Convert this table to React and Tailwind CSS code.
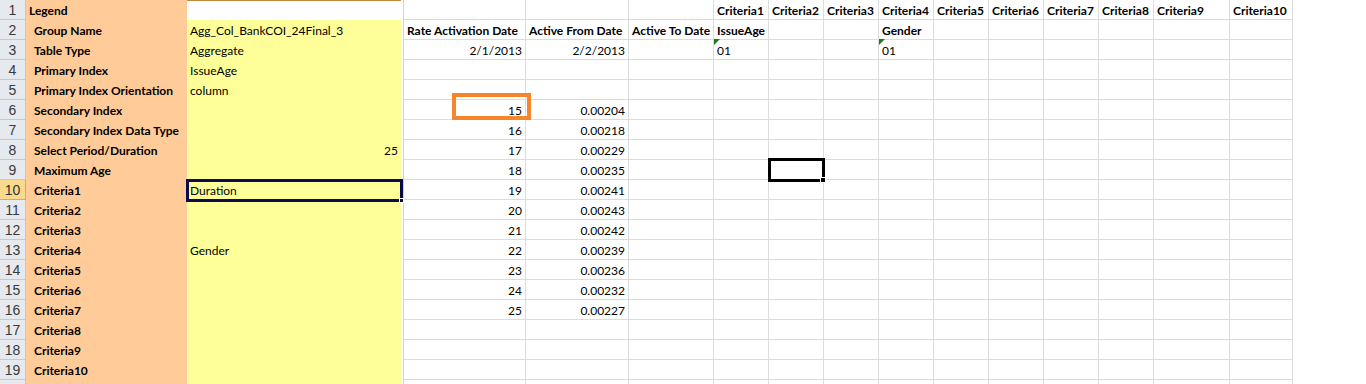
import React from "react";

const cols = [
  "w-[122px]", // C
  "w-[103px]", // D
  "w-[85px]", // E
  "w-[55px]", // F
  "w-[55px]", // G
  "w-[55px]", // H
  "w-[55px]", // I
  "w-[55px]", // J
  "w-[55px]", // K
  "w-[55px]", // L
  "w-[55px]", // M
  "w-[76px]", // N
  "w-[63px]", // O
];

// v = text, b = bold, r = right aligned, t = green triangle
const criteriaHead = Array.from({ length: 10 }, (_, i) => ({ v: `Criteria${i + 1}`, b: true }));

const rows = [
  { a: "Legend", legend: true, c: [null, null, null, ...criteriaHead] },
  {
    a: "Group Name",
    b: "Agg_Col_BankCOI_24Final_3",
    c: [
      { v: "Rate Activation Date", b: true },
      { v: "Active From Date", b: true },
      { v: "Active To Date", b: true },
      { v: "IssueAge", b: true },
      null,
      null,
      { v: "Gender", b: true },
    ],
  },
  {
    a: "Table Type",
    b: "Aggregate",
    c: [
      { v: "2/1/2013", r: true },
      { v: "2/2/2013", r: true },
      null,
      { v: "01", t: true },
      null,
      null,
      { v: "01", t: true },
    ],
  },
  { a: "Primary Index", b: "IssueAge" },
  { a: "Primary Index Orientation", b: "column" },
  { a: "Secondary Index", n: ["15", "0.00204"], mark: true },
  { a: "Secondary Index Data Type", n: ["16", "0.00218"] },
  { a: "Select Period/Duration", b: "25", bRight: true, n: ["17", "0.00229"] },
  { a: "Maximum Age", n: ["18", "0.00235"], active: true },
  { a: "Criteria1", b: "Duration", n: ["19", "0.00241"], selected: true },
  { a: "Criteria2", n: ["20", "0.00243"] },
  { a: "Criteria3", n: ["21", "0.00242"] },
  { a: "Criteria4", b: "Gender", n: ["22", "0.00239"] },
  { a: "Criteria5", n: ["23", "0.00236"] },
  { a: "Criteria6", n: ["24", "0.00232"] },
  { a: "Criteria7", n: ["25", "0.00227"] },
  { a: "Criteria8" },
  { a: "Criteria9" },
  { a: "Criteria10" },
  { a: "", tail: true },
];

const Cell = ({ w, cell, children }) => (
  <div
    className={`relative ${w} h-[20px] shrink-0 border-r border-b border-[#dadcdd] flex items-end px-[3px] whitespace-nowrap ${
      cell?.r ? "justify-end" : ""
    } ${cell?.b ? "font-bold" : ""}`}
  >
    {cell?.t && (
      <span className="absolute -top-[1px] left-0 w-0 h-0 border-t-[6px] border-r-[6px] border-t-[#1c7d1c] border-r-transparent" />
    )}
    {cell?.v}
    {children}
  </div>
);

const App = () => {
  return (
    <div className="w-[1366px] h-[384px] overflow-hidden bg-white text-[12px] leading-[16px] text-black font-['Lato','Liberation_Sans',sans-serif]">
      {rows.map((row, idx) => {
        const num = idx + 1;
        const cells = row.n
          ? [{ v: row.n[0], r: true }, { v: row.n[1], r: true }]
          : row.c || [];
        return (
          <div key={num} className="flex">
            <div
              className={`w-[26px] h-[20px] shrink-0 flex items-end pb-[1px] justify-center border-r border-b text-[14px] font-['Liberation_Sans',sans-serif] ${
                row.selected
                  ? "bg-[#f9d98c] border-[#f0a43a] text-[#333]"
                  : "bg-[#e6e9ee] border-[#c3c9d1] text-[#3a3a3a]"
              }`}
            >
              {row.tail ? "" : num}
            </div>
            <div
              className={`w-[161px] h-[20px] shrink-0 bg-[#ffcc99] flex items-end pb-[1px] font-bold whitespace-nowrap ${
                row.legend ? "pl-[3px]" : "pl-[8px]"
              }`}
            >
              {row.a}
            </div>
            <div
              className={`relative w-[214px] h-[20px] shrink-0 flex items-end pb-[1px] px-[3px] whitespace-nowrap ${
                row.legend ? "bg-white border-t border-[#c7883f]" : "bg-[#ffff99]"
              } ${row.bRight ? "justify-end" : ""}`}
            >
              {row.b}
              {row.selected && (
                <div className="absolute -left-[1px] -top-[1px] w-[217px] h-[23px] border-[3px] border-[#0b0b4f] z-10">
                  <span className="absolute -right-[4px] -bottom-[4px] w-[5px] h-[5px] bg-[#0b0b4f] border border-white" />
                </div>
              )}
            </div>
            <div className="w-[3px] h-[20px] shrink-0 bg-white border-r border-[#cfd1d3]" />
            {cols.map((w, ci) => (
              <Cell key={ci} w={w} cell={cells[ci]}>
                {ci === 0 && row.mark && (
                  <div className="absolute left-[48px] -top-[7px] w-[79px] h-[27px] border-[4px] border-[#f7852b] z-10" />
                )}
                {ci === 4 && row.active && (
                  <div className="absolute -left-[1px] -top-[2px] w-[57px] h-[24px] border-[3px] border-black z-10">
                    <span className="absolute -right-[4px] -bottom-[4px] w-[6px] h-[6px] bg-black border border-white" />
                  </div>
                )}
              </Cell>
            ))}
            <div className="flex-1 h-[20px] bg-white" />
          </div>
        );
      })}
    </div>
  );
};

export default App;
